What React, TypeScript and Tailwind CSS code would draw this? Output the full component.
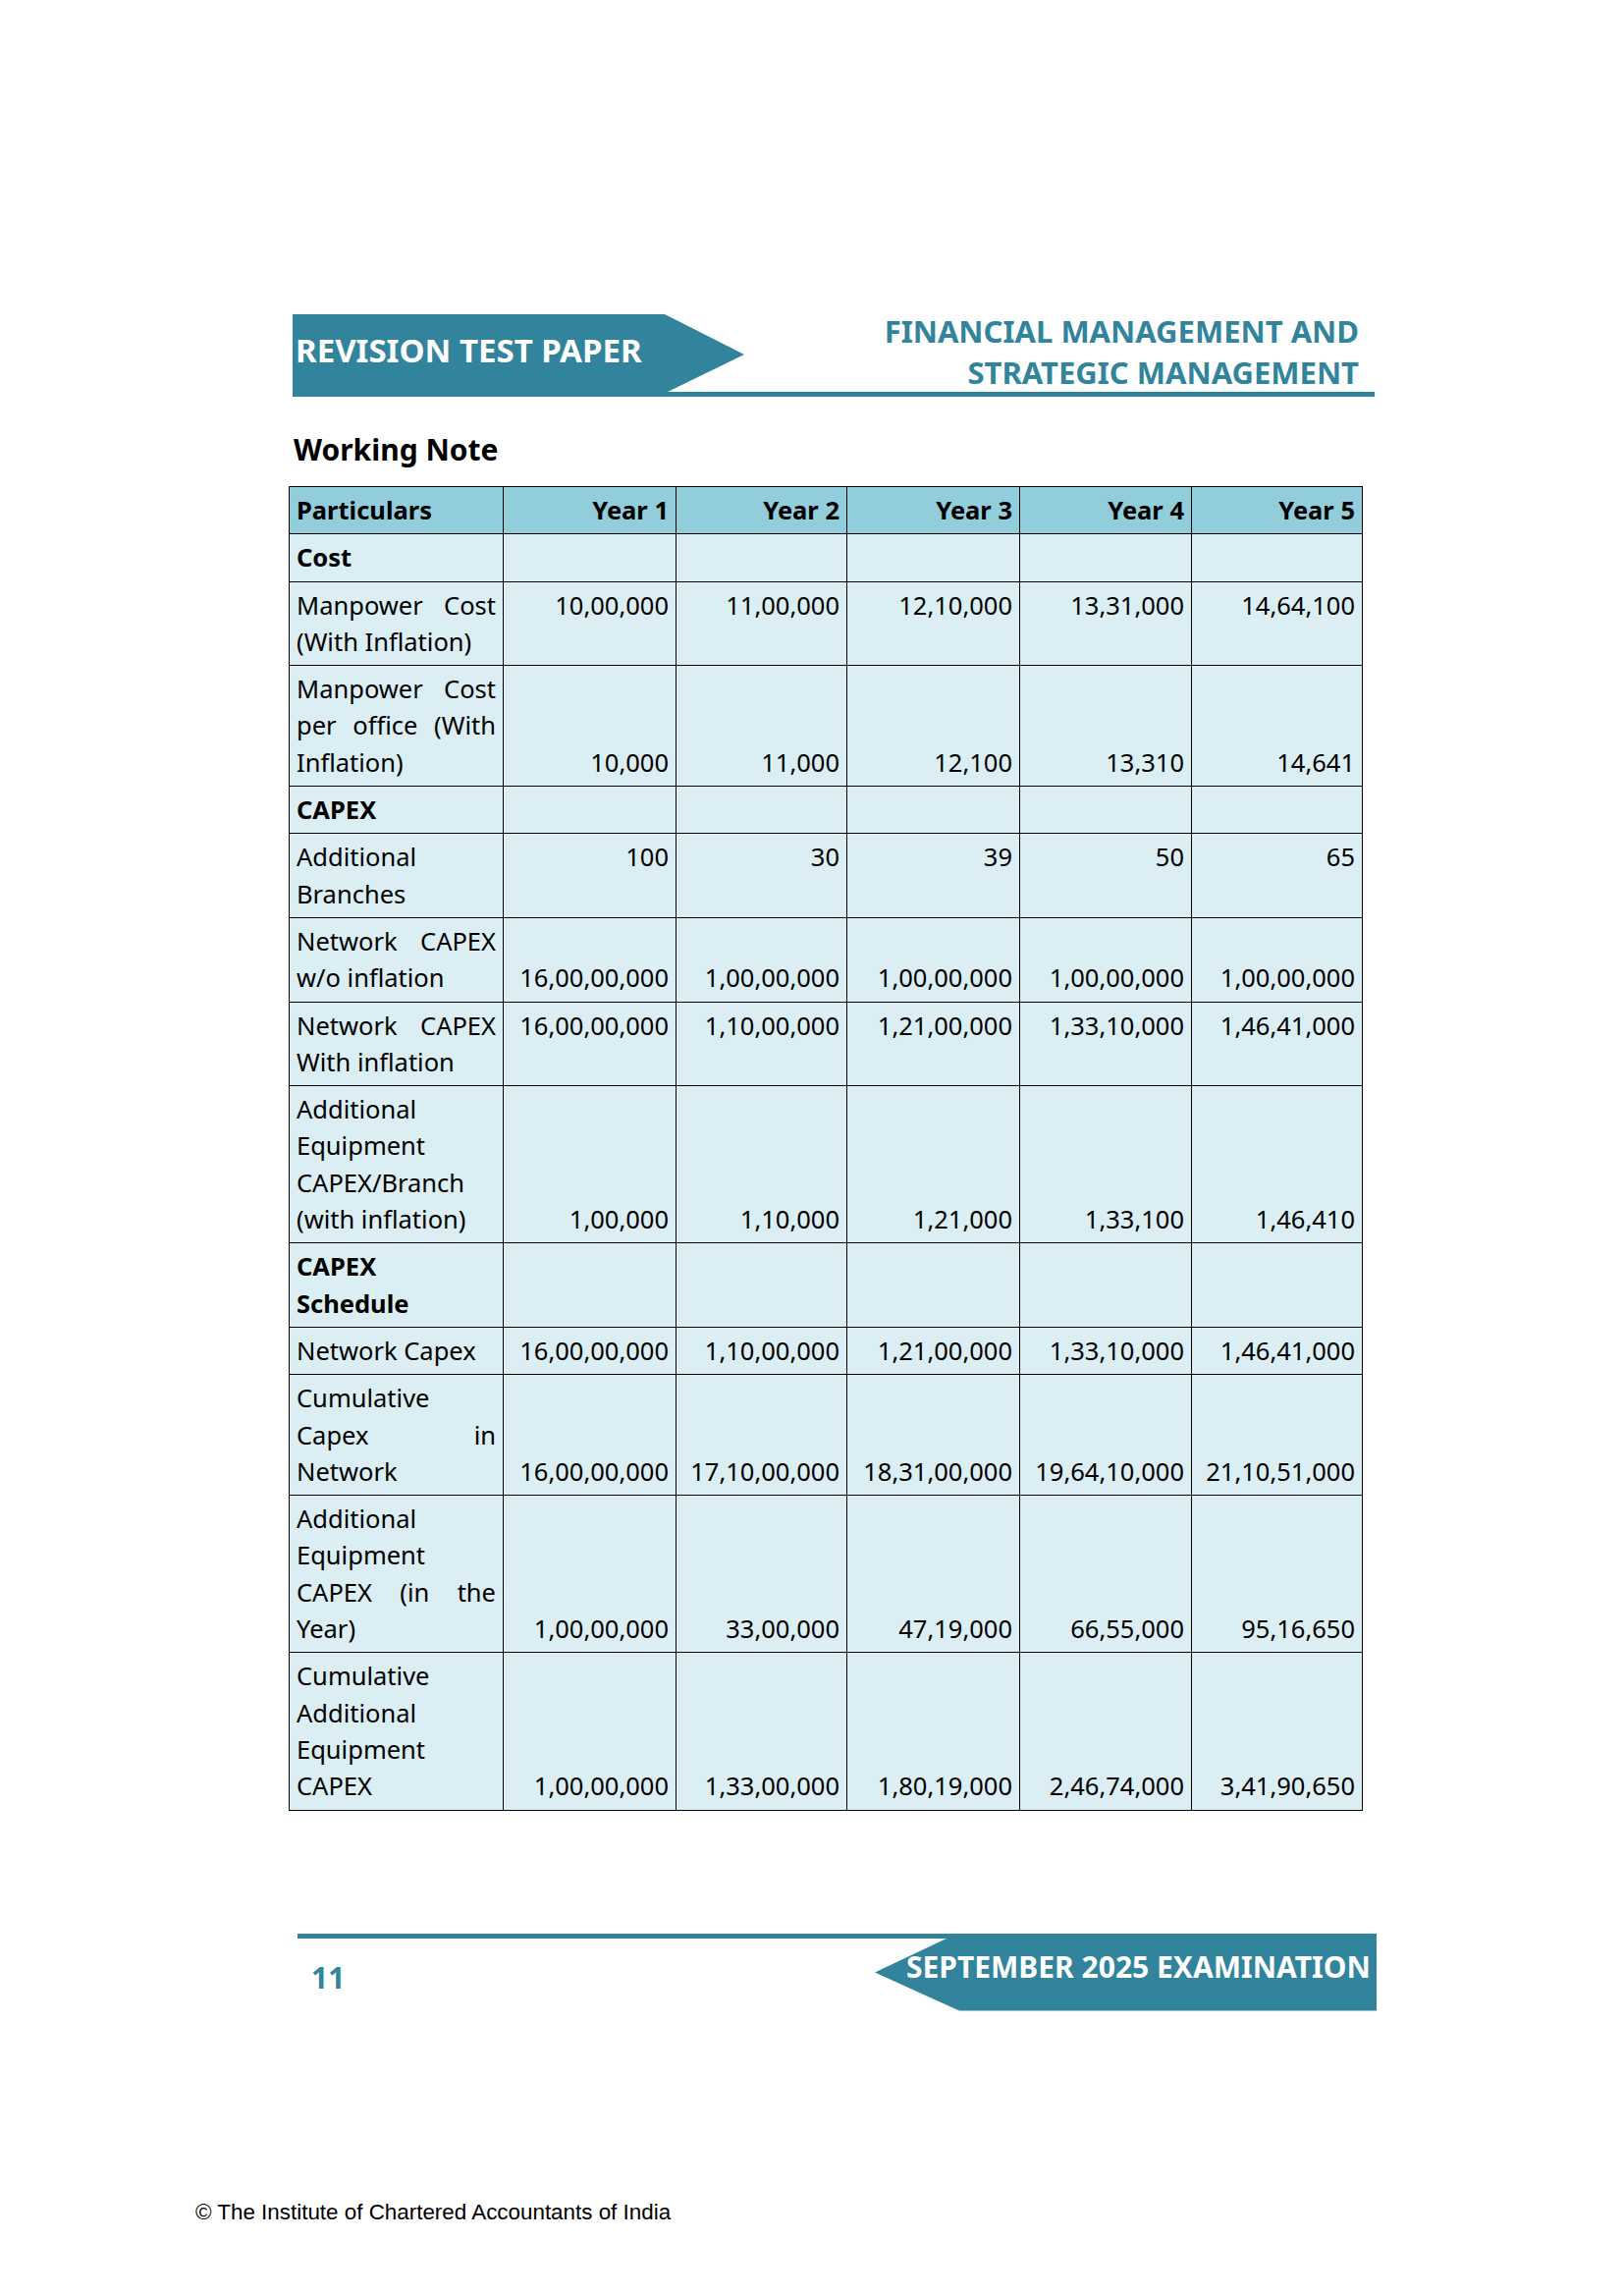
type Row = {
  label: string[];
  justify?: number[];
  bold?: boolean;
  values?: string[];
  align?: 'top' | 'bottom';
};

const rows: Row[] = [
  { label: ['Cost'], bold: true },
  {
    label: ['Manpower Cost', '(With Inflation)'],
    justify: [0],
    values: ['10,00,000', '11,00,000', '12,10,000', '13,31,000', '14,64,100'],
    align: 'top',
  },
  {
    label: ['Manpower Cost', 'per office (With', 'Inflation)'],
    justify: [0, 1],
    values: ['10,000', '11,000', '12,100', '13,310', '14,641'],
    align: 'bottom',
  },
  { label: ['CAPEX'], bold: true },
  {
    label: ['Additional', 'Branches'],
    values: ['100', '30', '39', '50', '65'],
    align: 'top',
  },
  {
    label: ['Network CAPEX', 'w/o inflation'],
    justify: [0],
    values: ['16,00,00,000', '1,00,00,000', '1,00,00,000', '1,00,00,000', '1,00,00,000'],
    align: 'bottom',
  },
  {
    label: ['Network CAPEX', 'With inflation'],
    justify: [0],
    values: ['16,00,00,000', '1,10,00,000', '1,21,00,000', '1,33,10,000', '1,46,41,000'],
    align: 'top',
  },
  {
    label: ['Additional', 'Equipment', 'CAPEX/Branch', '(with inflation)'],
    values: ['1,00,000', '1,10,000', '1,21,000', '1,33,100', '1,46,410'],
    align: 'bottom',
  },
  { label: ['CAPEX', 'Schedule'], bold: true },
  {
    label: ['Network Capex'],
    values: ['16,00,00,000', '1,10,00,000', '1,21,00,000', '1,33,10,000', '1,46,41,000'],
    align: 'top',
  },
  {
    label: ['Cumulative', 'Capex in', 'Network'],
    justify: [1],
    values: ['16,00,00,000', '17,10,00,000', '18,31,00,000', '19,64,10,000', '21,10,51,000'],
    align: 'bottom',
  },
  {
    label: ['Additional', 'Equipment', 'CAPEX (in the', 'Year)'],
    justify: [2],
    values: ['1,00,00,000', '33,00,000', '47,19,000', '66,55,000', '95,16,650'],
    align: 'bottom',
  },
  {
    label: ['Cumulative', 'Additional', 'Equipment', 'CAPEX'],
    values: ['1,00,00,000', '1,33,00,000', '1,80,19,000', '2,46,74,000', '3,41,90,650'],
    align: 'bottom',
  },
];

const years = ['Year 1', 'Year 2', 'Year 3', 'Year 4', 'Year 5'];

const cell = 'border border-black px-[7px] pt-[5px] pb-[5px]';

export default function App() {
  return (
    <div className="w-[1654px] h-[2338px] bg-white text-black font-['Noto_Sans',sans-serif]">
      <div className="pt-[320px]">
        {/* Page header */}
        <header className="ml-[298px] w-[1102px] h-[84px] border-b-[5px] border-[#31849B] flex justify-between">
          <div className="w-[460px] h-[79px] bg-[#31849B] [clip-path:polygon(0_0,379px_0,460px_41px,382px_79px,0_79px)] pl-[3px] pt-[20px] text-white font-bold text-[33px] leading-none whitespace-nowrap">
            REVISION TEST PAPER
          </div>
          <div className="-mt-[3px] pr-[16px] text-right text-[#31849B] font-bold text-[31px] leading-[41.5px] whitespace-nowrap">
            <div>FINANCIAL MANAGEMENT AND</div>
            <div>STRATEGIC MANAGEMENT</div>
          </div>
        </header>

        <h2 className="ml-[299px] mt-[39px] text-[30px] font-bold leading-none">Working Note</h2>

        {/* Working note table */}
        <table className="ml-[294px] mt-[22px] w-[1093px] table-fixed border-collapse text-[25.5px] leading-[37.3px]">
          <colgroup>
            <col className="w-[218px]" />
            <col className="w-[176px]" />
            <col className="w-[174px]" />
            <col className="w-[176px]" />
            <col className="w-[175px]" />
            <col className="w-[174px]" />
          </colgroup>
          <thead>
            <tr className="bg-[#92CDDC] font-bold">
              <th className={`${cell} text-left font-bold`}>Particulars</th>
              {years.map((y) => (
                <th key={y} className={`${cell} text-right font-bold`}>
                  {y}
                </th>
              ))}
            </tr>
          </thead>
          <tbody>
            {rows.map((r, i) => (
              <tr key={i} className="bg-[#DAEEF3]">
                <td className={`${cell} align-top ${r.bold ? 'font-bold' : ''}`}>
                  {r.label.map((line, j) => (
                    <div
                      key={j}
                      className={`whitespace-nowrap ${
                        r.justify?.includes(j) ? 'text-justify [text-align-last:justify]' : 'text-left'
                      }`}
                    >
                      {line}
                    </div>
                  ))}
                </td>
                {(r.values ?? ['', '', '', '', '']).map((v, k) => (
                  <td
                    key={k}
                    className={`${cell} text-right whitespace-nowrap ${
                      r.align === 'bottom' ? 'align-bottom' : 'align-top'
                    }`}
                  >
                    {v}
                  </td>
                ))}
              </tr>
            ))}
          </tbody>
        </table>

        {/* Page footer */}
        <footer className="ml-[303px] mt-[125px] w-[1099px] border-t-[5px] border-[#31849B] flex justify-between">
          <div className="pl-[14px] mt-[25px] text-[30px] font-bold leading-none text-[#31849B]">11</div>
          <div className="w-[511px] h-[74px] bg-[#31849B] [clip-path:polygon(74px_0,100%_0,100%_100%,86px_100%,0_35px)] pl-[32px] pt-[14px] text-white font-bold text-[30px] leading-none whitespace-nowrap">
            SEPTEMBER 2025 EXAMINATION
          </div>
        </footer>

        <div className="mt-[194px] pl-[199px] font-['Liberation_Sans',Arial,sans-serif] text-[22.4px] leading-none">
          © The Institute of Chartered Accountants of India
        </div>
      </div>
    </div>
  );
}
